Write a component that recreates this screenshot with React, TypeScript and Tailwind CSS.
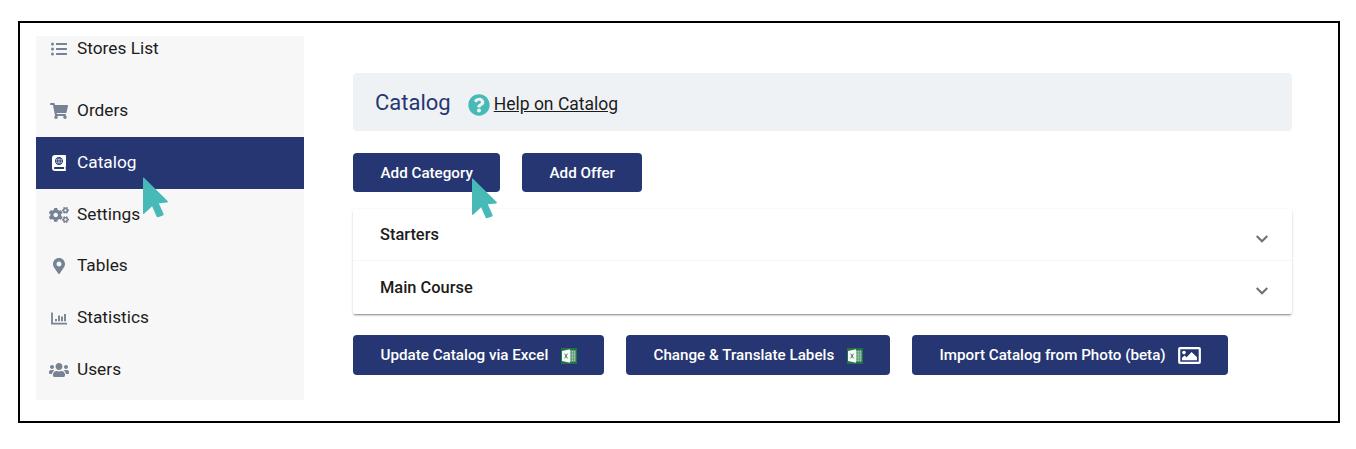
import type { ReactNode } from "react";
import {
  FaListUl,
  FaShoppingCart,
  FaAtlas,
  FaCogs,
  FaMapMarkerAlt,
  FaUsers,
  FaQuestionCircle,
} from "react-icons/fa";

function Pointer({ className }: { className: string }) {
  return (
    <svg className={`absolute z-10 h-[41px] w-[27px] ${className}`} viewBox="0 0 27 41" fill="#47bab8">
      <path d="M1 .8 Q1 0 2 .8 L25.6 24 Q26.6 25.4 25 25.4 L16.8 26.2 L21.6 37 Q21.8 38 21 38.4 L16 40.2 Q15 40.4 14.6 39.6 L10.1 29.2 L2.4 36.6 Q1 37.6 1 36 Z" />
    </svg>
  );
}

function ChartIcon() {
  return (
    <svg className="h-4 w-4" viewBox="0 0 16 16" fill="none" stroke="currentColor">
      <path d="M1 2.5v11.2H16" strokeWidth="1.8" />
      <path d="M5 11.3V9M8 11.3V5.5M11 11.3V6.5M14 11.3V4" strokeWidth="1.9" />
    </svg>
  );
}

function PhotoIcon() {
  return (
    <svg className="ml-3 h-[17px] w-[23px]" viewBox="0 0 23 17">
      <rect x="1.2" y="1.2" width="20.6" height="14.6" rx=".8" fill="none" stroke="currentColor" strokeWidth="2.2" />
      <circle cx="6" cy="5.6" r="1.8" fill="currentColor" />
      <path d="M4 13.2v-2.4l2.6-2.4 2 1.8 5-5.2 5.4 5.2v3z" fill="currentColor" />
    </svg>
  );
}

function ExcelIcon() {
  return (
    <svg className="mt-[2px] ml-[13px] h-4 w-4" viewBox="0 0 16 16">
      <rect width="16" height="16" fill="#207347" />
      <rect x="8.5" y="2.5" width="6" height="11" fill="#9fc8af" />
      <path d="M10.5 2.5v11M12.5 2.5v11M8.5 5h6M8.5 8h6M8.5 11h6" stroke="#4b9068" strokeWidth=".6" />
      <path d="M1 3 9 1.2v13.6L1 13z" fill="#f5faf7" />
      <path d="m3.7 5.7 2.8 4.7m0-4.7-2.8 4.7" stroke="#3b7d58" strokeWidth="1" />
    </svg>
  );
}

type NavItemProps = { icon: ReactNode; label: string; active?: boolean; className?: string };

function NavItem({ icon, label, active = false, className = "h-[51.75px]" }: NavItemProps) {
  return (
    <li
      className={`flex items-center text-[17.3px] ${
        active ? "bg-[#263672] text-white" : "text-[#1c1c1c]"
      } ${className}`}
    >
      <span className={`flex w-[41px] justify-center pl-1 text-base ${active ? "text-white" : "text-[#778294]"}`}>
        {icon}
      </span>
      <span>{label}</span>
    </li>
  );
}

function Button({ children, className }: { children: ReactNode; className: string }) {
  return (
    <button
      className={`flex items-center rounded-[4px] bg-[#263672] pl-[27.5px] text-[15.2px] font-medium whitespace-nowrap text-white ${className}`}
    >
      {children}
    </button>
  );
}

function CategoryRow({ label }: { label: string }) {
  return (
    <div className="flex h-[52px] items-center justify-between border-b border-[#f6f6f6] pr-6 pl-[27px] last:border-b-0">
      <span className="mt-[2px] text-[16.4px] font-medium text-[#1c1c1c]">{label}</span>
      <svg className="mt-[8px] h-3 w-3" viewBox="0 0 12 12" fill="none" stroke="#707070" strokeWidth="2">
        <path d="m.7 3 5.3 5.3L11.3 3" />
      </svg>
    </div>
  );
}

export default function App() {
  return (
    <div className="h-[449px] bg-white pt-[21px] pl-[18px] font-['Roboto',sans-serif]">
      <div className="flex h-[402px] w-[1322px] border-2 border-black pt-[13px] pl-4">
        <nav className="relative h-[364px] w-[268px] shrink-0 bg-[#f7f7f7]">
          <ul>
            <NavItem icon={<FaListUl />} label="Stores List" className="mb-[24.25px] h-[25px]" />
            <NavItem icon={<FaShoppingCart className="h-4 w-[18px]" />} label="Orders" />
            <NavItem icon={<FaAtlas />} label="Catalog" active />
            <NavItem icon={<FaCogs className="h-4 w-5" />} label="Settings" />
            <NavItem icon={<FaMapMarkerAlt />} label="Tables" />
            <NavItem icon={<ChartIcon />} label="Statistics" />
            <NavItem icon={<FaUsers className="h-4 w-5" />} label="Users" />
          </ul>
          <Pointer className="top-[141px] left-[106px]" />
        </nav>
        <main className="ml-[49px] w-[939px] pt-[37px]">
          <header className="flex h-[58px] items-center rounded-[4px] bg-[#eef2f5] pl-[22px]">
            <h1 className="text-[22px] text-[#263672]">Catalog</h1>
            <a className="mt-1 ml-[17px] flex items-center text-[#1c1c1c]">
              <FaQuestionCircle className="mt-px mr-[4px] h-[22px] w-[22px] text-[#47bab8]" />
              <span className="text-[17.5px] underline">Help on Catalog</span>
            </a>
          </header>
          <div className="relative mt-[22px] flex gap-[22px]">
            <Button className="h-[39px] w-[147px] pt-px">Add Category</Button>
            <Button className="h-[39px] w-[120px] pt-px">Add Offer</Button>
            <Pointer className="top-[25px] left-[118px]" />
          </div>
          <section className="mt-[17px] h-[105px] rounded-[2px] bg-white shadow-[0_2px_2px_-1px_rgba(0,0,0,0.4),0_1px_3px_rgba(0,0,0,0.14)]">
            <CategoryRow label="Starters" />
            <CategoryRow label="Main Course" />
          </section>
          <div className="mt-[21px] flex gap-[22px]">
            <Button className="h-10 w-[251px]">
              Update Catalog via Excel
              <ExcelIcon />
            </Button>
            <Button className="h-10 w-[264px]">
              Change &amp; Translate Labels
              <ExcelIcon />
            </Button>
            <Button className="h-10 w-[316px]">
              Import Catalog from Photo (beta)
              <PhotoIcon />
            </Button>
          </div>
        </main>
      </div>
    </div>
  );
}
